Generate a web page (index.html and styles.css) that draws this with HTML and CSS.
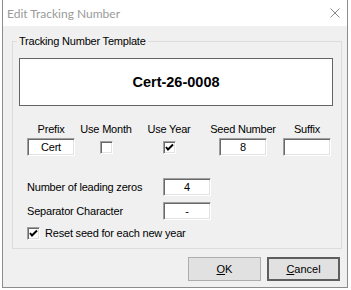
FILE: index.html
```html
<!DOCTYPE html>
<html lang="en">
<head>
  <meta charset="UTF-8">
  <title>Edit Tracking Number</title>
  <link rel="stylesheet" href="styles.css">
</head>
<body>
  <div class="desk">
    <div class="window">
      <div class="titlebar">
        <span class="title">Edit Tracking Number</span>
        <svg class="close" width="10" height="10" viewBox="0 0 10 10"><path d="M0.5 0.5 L9.5 9.5 M9.5 0.5 L0.5 9.5" stroke="#8a8a8a" stroke-width="1" fill="none"/></svg>
      </div>
      <div class="client">
        <fieldset class="group">
          <legend>Tracking Number Template</legend>
          <div class="preview">Cert-26-0008</div>

          <div class="parts">
            <span class="lbl">Prefix</span>
            <span class="lbl">Use Month</span>
            <span class="lbl">Use Year</span>
            <span class="lbl">Seed Number</span>
            <span class="lbl">Suffix</span>
            <span class="field">Cert</span>
            <span class="box"></span>
            <span class="box"><svg width="9" height="9" viewBox="0 0 9 9"><polyline points="1,4 3,6.5 8,1.5" stroke="#000" stroke-width="2" fill="none"/></svg></span>
            <span class="field">8</span>
            <span class="field"></span>
          </div>

          <div class="opt-row first">
            <span class="opt-label">Number of leading zeros</span>
            <span class="field">4</span>
          </div>
          <div class="opt-row">
            <span class="opt-label">Separator Character</span>
            <span class="field">-</span>
          </div>
          <div class="check-row">
            <span class="box"><svg width="9" height="9" viewBox="0 0 9 9"><polyline points="1,4 3,6.5 8,1.5" stroke="#000" stroke-width="2" fill="none"/></svg></span>
            <span>Reset seed for each new year</span>
          </div>
        </fieldset>

        <div class="buttons">
          <button class="btn"><u>O</u>K</button>
          <button class="btn focus"><u>C</u>ancel</button>
        </div>
      </div>
    </div>
  </div>
</body>
</html>
```

FILE: styles.css
```css
body { margin: 0; background: #fff; font-family: 'Liberation Sans', Arial, sans-serif; font-size: 11px; letter-spacing: -0.2px; color: #000; }
.desk { height: 290px; padding-left: 2px; overflow: hidden; }
.window { width: 346px; height: 288px; box-sizing: border-box; border: 1px solid #8c8c8c; border-top: none; display: flex; flex-direction: column; }

/* title bar */
.titlebar { height: 26px; flex: none; background: #fff; display: flex; align-items: center; justify-content: space-between; padding: 0 7px 0 4px; }
.title { font-family: Lato, 'Noto Sans', sans-serif; font-size: 12px; letter-spacing: 0; color: #9a9a9a; }
.close { display: block; }

.client { flex: 1; background: #f0f0f0; padding: 9px 0 0 9px; }

/* group box */
.group { margin: 0; width: 327px; box-sizing: border-box; border: 1px solid #dcdcdc; padding: 0 6px 8px; }
.group legend { padding: 0 2px; margin-left: -2px; line-height: 13px; }
.preview { margin-top: 10px; width: 314px; height: 48px; box-sizing: border-box; border: 1px solid #646464; background: #fff; display: flex; align-items: center; justify-content: center; font-size: 14.5px; font-weight: bold; letter-spacing: 0; }

.parts { display: grid; grid-template-columns: 60px 50px 76px 72px 56px; justify-items: center; align-items: center; row-gap: 2px; margin: 17px 0 0 2px; }
.lbl { line-height: 13px; white-space: nowrap; }

.field { display: block; width: 48px; height: 18px; box-sizing: border-box; background: #fff; border: 1px solid; border-color: #a0a0a0 #fff #fff #a0a0a0; box-shadow: inset 1px 1px #696969, inset -1px -1px #e3e3e3; text-align: center; line-height: 16px; }
.box { display: flex; align-items: center; justify-content: center; width: 13px; height: 13px; box-sizing: border-box; background: #fff; border: 1px solid; border-color: #a0a0a0 #fff #fff #a0a0a0; box-shadow: inset 1px 1px #696969, inset -1px -1px #e3e3e3; }
.box svg { display: block; }

.opt-row { display: flex; align-items: center; margin: 6px 0 0 8px; }
.opt-row.first { margin-top: 22px; }
.opt-label { width: 136px; }
.check-row { display: flex; align-items: center; gap: 5px; margin: 7px 0 0 8px; line-height: 13px; }

/* buttons */
.buttons { display: flex; justify-content: flex-end; gap: 6px; margin-top: 8px; padding-right: 7px; }
.btn { width: 73px; height: 24px; box-sizing: border-box; background: #e1e1e1; border: 1px solid #adadad; font: inherit; letter-spacing: 0; color: #000; padding: 0; }
.btn.focus { border: 2px solid #5e5e5e; }
```
